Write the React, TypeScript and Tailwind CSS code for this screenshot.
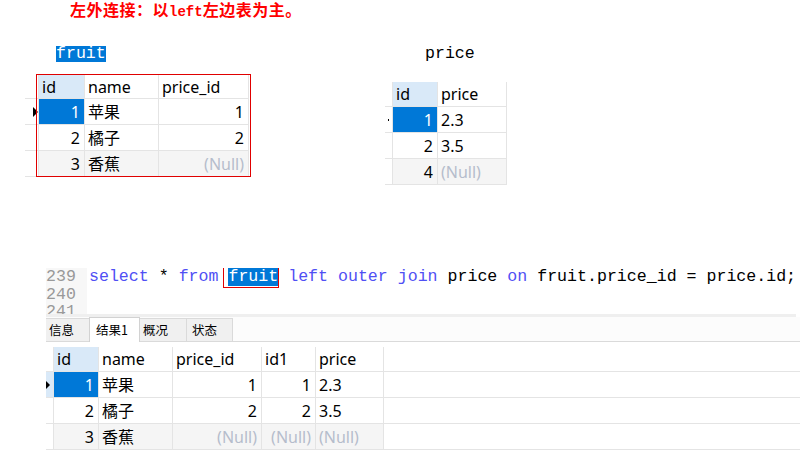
import React from "react";

type Col = { label: string; w: string; right?: boolean };
type Cell = string | null;

function Arrow({ cls }: { cls: string }) {
  return (
    <svg className={cls} width="5" height="10" viewBox="0 0 5 10">
      <polygon points="0,0 5,5 0,10" fill="#000" />
    </svg>
  );
}

function Grid({
  cols,
  rows,
  indW,
  headH,
  marker,
  indBlue,
}: {
  cols: Col[];
  rows: Cell[][];
  indW: string;
  headH: string;
  marker: React.ReactNode;
  indBlue?: boolean;
}) {
  return (
    <div className="flex flex-col font-['Noto_Sans','Noto_Sans_CJK_SC',sans-serif] text-[16px] text-black">
      <div className={`flex ${headH} border-b border-[#e4e4e4]`}>
        <div className={`${indW} shrink-0`} />
        {cols.map((c, i) => (
          <div
            key={c.label}
            className={`${c.w} shrink-0 flex items-center pl-[3px] border-l border-[#e4e4e4] ${
              i === 0 ? "bg-[#d9e9f8]" : "bg-white"
            } ${i === cols.length - 1 ? "border-r" : ""}`}
          >
            {c.label}
          </div>
        ))}
      </div>
      {rows.map((r, ri) => (
        <div key={ri} className="flex h-[26px] border-b border-[#e4e4e4]">
          <div
            className={`${indW} shrink-0 relative flex items-center ${
              ri === 0 && indBlue ? "bg-[#d9e9f8]" : "bg-white"
            }`}
          >
            {ri === 0 ? marker : null}
          </div>
          {r.map((v, ci) => {
            const c = cols[ci];
            const sel = ri === 0 && ci === 0;
            return (
              <div
                key={ci}
                className={`${c.w} shrink-0 flex items-center border-l border-[#e4e4e4] pl-[3px] pr-[4px] ${
                  c.right ? "justify-end" : "justify-start"
                } ${sel ? "bg-[#0078d7] text-white" : ri === 2 ? "bg-[#f5f5f5]" : "bg-white"} ${
                  ci === cols.length - 1 ? "border-r" : ""
                }`}
              >
                {v === null ? <span className="text-[#b5bdcc]">(Null)</span> : v}
              </div>
            );
          })}
        </div>
      ))}
    </div>
  );
}

const fruitCols: Col[] = [
  { label: "id", w: "w-[46px]", right: true },
  { label: "name", w: "w-[74px]" },
  { label: "price_id", w: "w-[91px]", right: true },
];
const fruitRows: Cell[][] = [
  ["1", "苹果", "1"],
  ["2", "橘子", "2"],
  ["3", "香蕉", null],
];

const priceCols: Col[] = [
  { label: "id", w: "w-[45px]", right: true },
  { label: "price", w: "w-[70px]" },
];
const priceRows: Cell[][] = [
  ["1", "2.3"],
  ["2", "3.5"],
  ["4", null],
];

const resCols: Col[] = [
  { label: "id", w: "w-[45px]", right: true },
  { label: "name", w: "w-[74px]" },
  { label: "price_id", w: "w-[89px]", right: true },
  { label: "id1", w: "w-[54px]", right: true },
  { label: "price", w: "w-[69px]" },
];
const resRows: Cell[][] = [
  ["1", "苹果", "1", "1", "2.3"],
  ["2", "橘子", "2", "2", "3.5"],
  ["3", "香蕉", null, null, null],
];

const kw = "text-[#5050f4]";

export default function App() {
  return (
    <div className="w-[800px] h-[468px] bg-white overflow-hidden">
      {/* title */}
      <div className="h-[20px] pl-[70px] text-[16px] leading-[19px] tracking-[0.5px] font-bold text-[#ff0000] font-['Noto_Sans_CJK_SC',sans-serif]">
        左外连接：以<span className="font-['Liberation_Mono',monospace] text-[14px] tracking-normal">left</span>左边表为主。
      </div>

      {/* source tables */}
      <div className="h-[248px] flex items-start">
        <div className="ml-[25px] w-[224px]">
          <div className="ml-[31px] mt-[26px] h-[16px] w-fit bg-[#0078d7] text-white font-['Liberation_Mono',monospace] text-[16.6px] leading-[16px]">
            fruit
          </div>
          <div className="relative mt-[13px]">
            <Grid
              cols={fruitCols}
              rows={fruitRows}
              indW="w-[13px]"
              headH="h-[24px]"
              marker={<Arrow cls="absolute left-[8px]" />}
            />
            <div className="absolute left-[11px] top-[-1px] w-[215px] h-[103px] border border-[#e00000]" />
          </div>
        </div>
        <div className="ml-[136px]">
          <div className="ml-[40px] mt-[26px] h-[16px] text-black font-['Liberation_Mono',monospace] text-[16.6px] leading-[16px]">
            price
          </div>
          <div className="mt-[20px]">
            <Grid
              cols={priceCols}
              rows={priceRows}
              indW="w-[7px]"
              headH="h-[25px]"
              marker={<div className="absolute left-[3px] w-[1px] h-[2px] bg-black" />}
            />
          </div>
        </div>
      </div>

      {/* editor */}
      <div className="ml-[46px] w-[750px] h-[46px] overflow-hidden flex font-['Liberation_Mono',monospace] text-[16.6px] leading-[17.5px]">
        <div className="w-[41px] shrink-0 bg-[#f7f7f7] text-[#999999]">
          <div>239</div>
          <div>240</div>
          <div>241</div>
        </div>
        <div className="pl-[2px] whitespace-pre text-black">
          <span className={kw}>select</span> * <span className={kw}>from</span>{" "}
          <span className="relative bg-[#0078d7] text-white">
            fruit
            <span className="absolute left-[-5px] top-[-4px] w-[56px] h-[25px] border border-[#e00000]" />
          </span>{" "}
          <span className={kw}>left outer join</span> price <span className={kw}>on</span> fruit.price_id = price.id;
        </div>
      </div>
      <div className="ml-[46px] w-[750px] h-[3px] bg-[#efefef]" />

      {/* tabs */}
      <div className="ml-[46px] w-[754px] h-[25px] flex items-start border-b border-[#dadada] bg-[#fcfcfc] font-['Noto_Sans_CJK_SC',sans-serif] text-[12.5px] text-black">
        <div className="mt-[1px] h-[23px] w-[43px] pl-[3px] flex items-center bg-[#f0f0f0] border-t border-[#dadada]">信息</div>
        <div className="h-[25px] w-[51px] pl-[6px] flex items-center bg-white border border-b-0 border-[#d2d2d2]">结果1</div>
        <div className="mt-[1px] h-[23px] w-[47px] pl-[3px] flex items-center bg-[#f0f0f0] border-t border-r border-[#dadada]">概况</div>
        <div className="mt-[1px] h-[23px] w-[46px] pl-[5px] flex items-center bg-[#f0f0f0] border-t border-r border-[#dadada]">状态</div>
      </div>

      {/* result */}
      <div className="ml-[46px] mt-[5px]">
        <Grid
          cols={resCols}
          rows={resRows}
          indW="w-[7px]"
          headH="h-[25px]"
          indBlue
          marker={<Arrow cls="absolute left-0 w-[4px] h-[8px]" />}
        />
      </div>
    </div>
  );
}
